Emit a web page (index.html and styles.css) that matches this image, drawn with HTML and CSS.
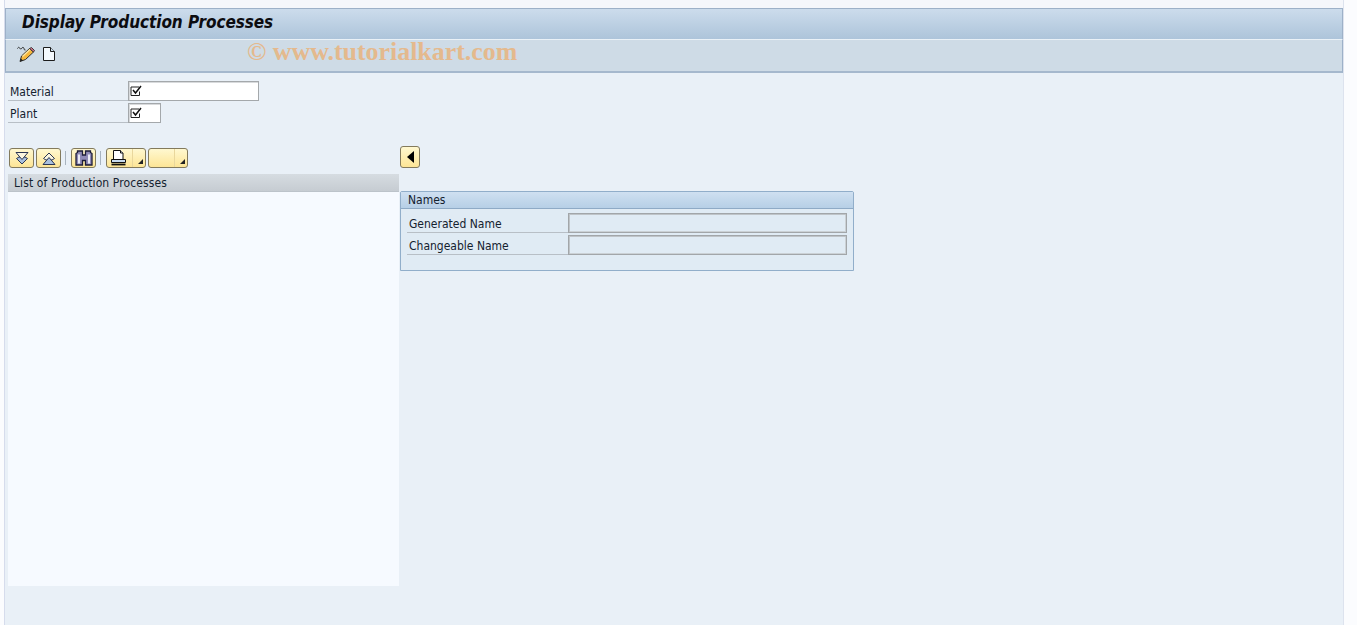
FILE: index.html
```html
<!DOCTYPE html>
<html lang="en">
<head>
<meta charset="utf-8">
<title>Display Production Processes</title>
<link rel="stylesheet" href="styles.css">
</head>
<body>
<div class="window">
  <header class="titlebar"><h1>Display Production Processes</h1></header>
  <div class="appbar">
    <button class="tool tool-edit" aria-label="Display/Change">
      <svg width="18" height="18" viewBox="0 0 18 18"><path d="M.5 3.500c1-2 2-1 2.500 0s1.500.5 2-.5 1.500-1 2 .5.5 2 1.500 1.500" fill="none" stroke="#2a2a2a" stroke-width="1"/><path d="M3 16.500l1.500-5.500L12.500 3.500l4 3.500-8 7.500z" fill="#f6b73c" stroke="#2f2f2f" stroke-width="1"/><path d="M5.500 11.500l8-7.500" stroke="#fbe7a8" stroke-width="1.300"/><path d="M12.500 3.500l4 3.500 1-1.500-3-3z" fill="#d0708a" stroke="#2f2f2f" stroke-width=".9"/><path d="M3 16.500l.8-3 2.400 2z" fill="#222"/></svg>
    </button>
    <button class="tool tool-new" aria-label="New">
      <svg width="14" height="16" viewBox="0 0 14 16"><path d="M1.500 1.500h7l4 4v9h-11z" fill="#f4f9fd" stroke="#1c1c1c"/><path d="M8.500 1.500v4h4" fill="#cfe0ee" stroke="#1c1c1c"/></svg>
    </button>
    <span class="watermark">© www.tutorialkart.com</span>
  </div>
  <main class="content">
    <section class="selection">
      <div class="field-row">
        <label class="sel-label">Material</label>
        <span class="input input-long"><svg class="check" width="12" height="12" viewBox="0 0 12 12"><path d="M9.500 6.500v4h-8.500v-8.500h8" fill="none" stroke="#222"/><path d="M3 5l2.500 3L11 1" fill="none" stroke="#111" stroke-width="1.500"/></svg></span>
      </div>
      <div class="field-row">
        <label class="sel-label">Plant</label>
        <span class="input input-short"><svg class="check" width="12" height="12" viewBox="0 0 12 12"><path d="M9.500 6.500v4h-8.500v-8.500h8" fill="none" stroke="#222"/><path d="M3 5l2.500 3L11 1" fill="none" stroke="#111" stroke-width="1.500"/></svg></span>
      </div>
    </section>
    <section class="split">
      <div class="tree-col">
        <div class="btnbar">
          <button class="ybtn ybtn-icon" aria-label="Expand">
            <svg width="16" height="13" viewBox="0 0 16 13"><path d="M2.500 6.500L8 12l5.500-5.500L11 5H5z" fill="#a9c0de" stroke="#2b3654"/><path d="M2 .5h12L8 7.500z" fill="#fbf6df" stroke="#2b3654"/></svg>
          </button>
          <button class="ybtn ybtn-icon" aria-label="Collapse">
            <svg width="16" height="13" viewBox="0 0 16 13"><path d="M2.500 6.500L8 1l5.500 5.500L11 8H5z" fill="#fbf6df" stroke="#2b3654"/><path d="M2 12.500h12L8 5.500z" fill="#a9c0de" stroke="#2b3654"/></svg>
          </button>
          <span class="sep"></span>
          <button class="ybtn ybtn-icon" aria-label="Find">
            <svg width="18" height="16" viewBox="0 0 18 16"><path d="M2.500 1h5v4h3V1h5v1.500l1.500 1v11.500h-6.500v-4.500h-3v4.500H1V3.500l1.500-1z" fill="#8f8ab6" stroke="#1d1d38" stroke-width="1.300"/><path d="M4 4.500v9M14 4.500v9" stroke="#f4f4fb" stroke-width="1.800"/></svg>
          </button>
          <span class="sep"></span>
          <button class="ybtn ybtn-menu" aria-label="Print">
            <span class="menu-main"><svg width="17" height="16" viewBox="0 0 17 16"><path d="M3.500 .5h7l2.500 2.500v7.500H3.500z" fill="#fff" stroke="#111"/><path d="M10.500 .5v2.500h2.500" fill="#dfe8f2" stroke="#111"/><path d="M1.500 9.500h14v3h-14z" fill="#c7dbf0" stroke="#111"/><path d="M1.500 14.500h14" stroke="#111" stroke-width="1.800"/></svg></span>
            <span class="menu-arrow"></span>
          </button>
          <button class="ybtn ybtn-menu" aria-label="More">
            <span class="menu-main"></span>
            <span class="menu-arrow"></span>
          </button>
        </div>
        <div class="tree">
          <div class="tree-head">List of Production Processes</div>
          <div class="tree-body"></div>
        </div>
      </div>
      <div class="detail-col">
        <button class="ybtn ybtn-collapse" aria-label="Hide"><span class="tri-left"></span></button>
        <div class="group">
          <div class="group-head">Names</div>
          <div class="group-body">
            <div class="name-row">
              <label class="name-label">Generated Name</label>
              <span class="name-input"></span>
            </div>
            <div class="name-row">
              <label class="name-label">Changeable Name</label>
              <span class="name-input"></span>
            </div>
          </div>
        </div>
      </div>
    </section>
  </main>
</div>
</body>
</html>
```
FILE: styles.css
```css
* { box-sizing: border-box; }
html, body { height: 100%; }
body {
  margin: 0;
  height: 625px;
  overflow: hidden;
  background: #fbfcfe;
  font-family: "DejaVu Sans", "Liberation Sans", Arial, sans-serif;
  font-stretch: condensed;
  font-size: 12px;
  color: #14222f;
}
.window {
  position: relative;
  width: 1340px;
  height: 625px;
  margin-left: 4px;
  padding-top: 8px;
  background: linear-gradient(#f5f7fb 0 8px, #e9f0f7 8px);
  border-left: 1px solid #d6dcec;
  border-right: 1px solid #dde3ee;
}
.titlebar {
  height: 31px;
  border: 1px solid #9db1c8;
  border-bottom: 0;
  background: linear-gradient(#ccdcec, #adc4da);
  padding: 3px 0 0 16px;
}
.titlebar h1 {
  margin: 0;
  font-size: 17px;
  line-height: 21px;
  font-weight: bold;
  font-style: italic;
  letter-spacing: -0.07px;
  color: #0c0c10;
}
.appbar {
  position: relative;
  height: 34px;
  display: flex;
  align-items: center;
  gap: 7px;
  padding: 0 0 3px 11px;
  background: #cedbe6;
  border: 1px solid #9db1c8;
  border-top: 1px solid #eaf1f7;
  border-bottom: 2px solid #a5b8cd;
}
.tool {
  display: flex;
  padding: 0;
  border: 0;
  background: none;
}
.watermark {
  position: absolute;
  left: 241px;
  top: -2px;
  font-family: "Liberation Serif", serif;
  font-stretch: normal;
  font-weight: bold;
  font-size: 25.9px;
  line-height: 27px;
  color: #e4b98d;
}
.content {
  padding: 8px 0 0 3px;
}
.selection {
  display: flex;
  flex-direction: column;
  gap: 2px;
}
.field-row {
  display: flex;
  height: 20px;
}
.sel-label {
  width: 120px;
  height: 20px;
  padding: 4px 0 0 2px;
  line-height: 15px;
  border-bottom: 1px solid #b8bfc6;
}
.input {
  display: block;
  height: 20px;
  padding: 3px 0 0 1px;
  background: #fff;
  border: 1px solid #a4a8ab;
  box-shadow: inset 1px 1px 0 #d8dadc;
}
.check { display: block; }
.input-long { width: 131px; }
.input-short { width: 33px; }
.split {
  display: flex;
  margin-top: 25px;
}
.tree-col { width: 391px; }
.btnbar {
  height: 20px;
  display: flex;
  align-items: stretch;
  margin-left: 1px;
}
.ybtn {
  display: flex;
  align-items: center;
  justify-content: center;
  padding: 0;
  border: 1px solid #837a5c;
  border-radius: 3px;
  background: linear-gradient(#fff8d0, #fde596);
}
.ybtn-icon { width: 25px; margin-right: 2px; }
.sep {
  width: 1px;
  margin: 3px 5px 3px 2px;
  background: #a9b4bf;
}
.ybtn-menu { width: 40px; margin-right: 2px; }
.menu-main {
  flex: 1;
  height: 100%;
  display: flex;
  align-items: center;
  padding-left: 3px;
  border-right: 1px solid #e9d79c;
}
.menu-arrow {
  position: relative;
  width: 12px;
  height: 100%;
}
.menu-arrow::after {
  content: "";
  position: absolute;
  right: 2px;
  bottom: 3px;
  border-style: solid;
  border-width: 0 0 5px 5px;
  border-color: transparent transparent #222 transparent;
}
.tree { margin-top: 6px; }
.tree-head {
  height: 18px;
  padding: 1px 0 0 6px;
  line-height: 17px;
  letter-spacing: 0.1px;
  background: linear-gradient(#d6dce1, #c6ccd2);
  border-bottom: 1px solid #bcc3ca;
}
.tree-body {
  height: 394px;
  background: #f6faff;
}
.detail-col {
  width: 454px;
  margin-left: 1px;
  margin-top: -2px;
}
.ybtn-collapse {
  width: 20px;
  height: 22px;
}
.tri-left {
  border-style: solid;
  border-width: 6px 7px 6px 0;
  border-color: transparent #000 transparent transparent;
}
.group {
  margin-top: 23px;
  height: 80px;
  border: 1px solid #91aeca;
  border-radius: 2px 2px 0 0;
  background: #e0ebf4;
}
.group-head {
  height: 17px;
  padding-left: 7px;
  line-height: 16px;
  background: linear-gradient(#cfe0f1, #b6cfe6);
  border-bottom: 1px solid #8eaac6;
}
.group-body {
  display: flex;
  flex-direction: column;
  gap: 2px;
  padding: 4px 0 0 6px;
}
.name-row {
  display: flex;
  height: 20px;
}
.name-label {
  width: 161px;
  height: 20px;
  padding: 4px 0 0 2px;
  line-height: 15px;
  border-bottom: 1px solid #b8bfc6;
}
.name-input {
  width: 279px;
  height: 20px;
  background: #e0ebf4;
  border: 1px solid #a2a6a9;
  box-shadow: inset 1px 1px 0 #bfc4c8, inset -1px -1px 0 #cbd1d5;
}
```
